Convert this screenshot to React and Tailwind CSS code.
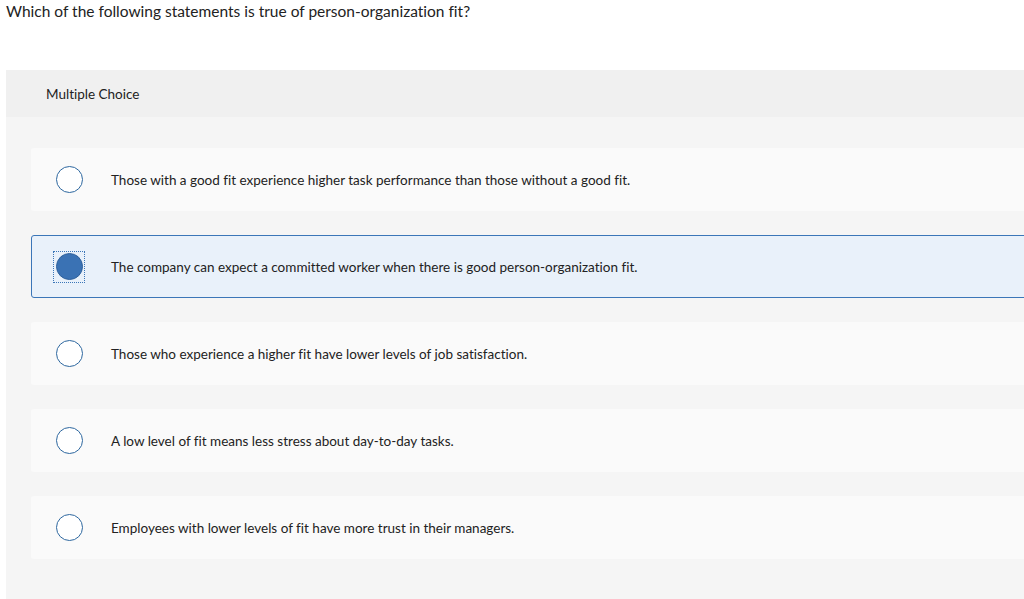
const options = [
  'Those with a good fit experience higher task performance than those without a good fit.',
  'The company can expect a committed worker when there is good person-organization fit.',
  'Those who experience a higher fit have lower levels of job satisfaction.',
  'A low level of fit means less stress about day-to-day tasks.',
  'Employees with lower levels of fit have more trust in their managers.',
];

const Radio = ({ checked }) => {
  if (checked) {
    return (
      <div className="w-[32px] h-[32px] border border-dotted border-[#3b76b8] flex items-center justify-center">
        <div className="w-[27px] h-[27px] rounded-full bg-[#3a72b4] border border-[#2f619c]" />
      </div>
    );
  }
  return (
    <div className="w-[32px] h-[32px] flex items-center justify-center">
      <div className="w-[27px] h-[27px] rounded-full bg-white border-[1.5px] border-[#2d679f]" />
    </div>
  );
};

export default function App() {
  return (
    <div
      className="w-[1024px] h-[599px] overflow-hidden bg-white text-[#333] [font-variant-ligatures:none]"
      style={{ fontFamily: 'Lato, "Open Sans", sans-serif' }}
    >
      <div className="pl-[6px] h-[70px] text-[15.5px] leading-[22px] text-[#222]">
        Which of the following statements is true of person-organization fit?
      </div>
      <div className="ml-[6px] w-[1100px] bg-[#f5f5f5] h-[600px]">
        <div className="h-[47px] bg-[#f0f0f0] flex items-center pl-[40px] pt-[2px] text-[13.5px] text-[#222]">
          Multiple Choice
        </div>
        <div className="pt-[31px] pl-[25px] flex flex-col gap-[24px]">
          {options.map((text, i) => {
            const selected = i === 1;
            return (
              <div
                key={i}
                className={`h-[63px] flex items-center rounded-[3px] ${
                  selected ? 'bg-[#e9f1fa] border border-[#3b76b8]' : 'bg-[#fafafa] border border-transparent'
                }`}
              >
                <div className="ml-[21px] mr-[26px]">
                  <Radio checked={selected} />
                </div>
                <span className="text-[13.5px] text-[#222] pt-[1px]">{text}</span>
              </div>
            );
          })}
        </div>
      </div>
    </div>
  );
}
